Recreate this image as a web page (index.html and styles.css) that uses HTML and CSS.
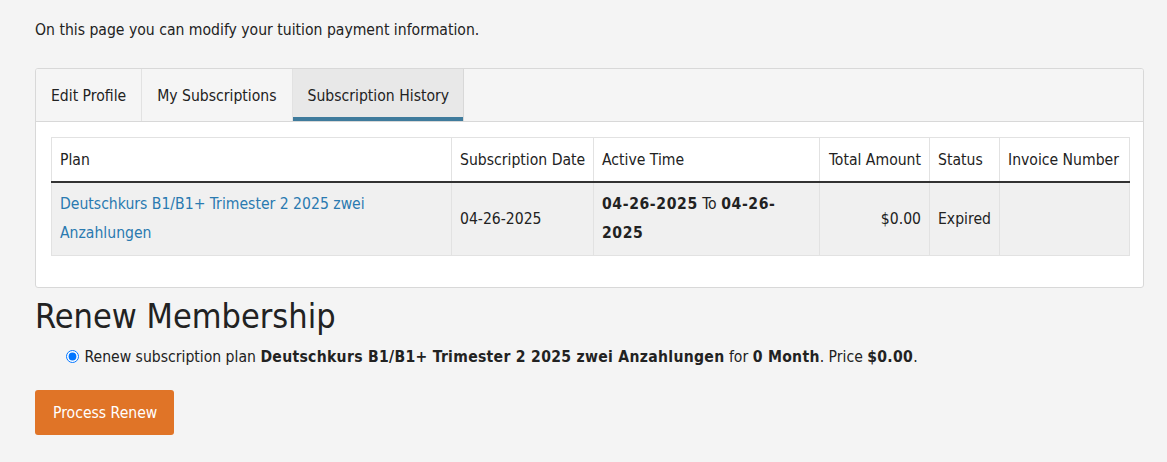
FILE: index.html
```html
<!DOCTYPE html>
<html>
<head>
<meta charset="utf-8">
<link rel="stylesheet" href="styles.css">
</head>
<body>
<div class="page">
  <p class="intro">On this page you can modify your tuition payment information.</p>
  <div class="panel">
    <div class="tabs">
      <div class="tab">Edit Profile</div>
      <div class="tab">My Subscriptions</div>
      <div class="tab active">Subscription History</div>
    </div>
    <div class="panel-body">
      <table class="history">
        <colgroup>
          <col class="c-plan">
          <col class="c-date">
          <col class="c-active">
          <col class="c-total">
          <col class="c-status">
          <col class="c-inv">
        </colgroup>
        <thead>
          <tr>
            <th>Plan</th>
            <th>Subscription Date</th>
            <th>Active Time</th>
            <th class="right">Total Amount</th>
            <th>Status</th>
            <th>Invoice Number</th>
          </tr>
        </thead>
        <tbody>
          <tr>
            <td><a href="#">Deutschkurs B1/B1+ Trimester 2 2025 zwei Anzahlungen</a></td>
            <td>04-26-2025</td>
            <td class="active-time"><strong>04-26-2025</strong> To <strong>04-26-<wbr>2025</strong></td>
            <td class="right">$0.00</td>
            <td>Expired</td>
            <td></td>
          </tr>
        </tbody>
      </table>
    </div>
  </div>
  <h2 class="renew-title">Renew Membership</h2>
  <label class="renew-option"><input type="radio" checked> Renew subscription plan <strong>Deutschkurs B1/B1+ Trimester 2 2025 zwei Anzahlungen</strong> for <strong>0 Month</strong>. Price <strong>$0.00</strong>.</label>
  <button class="btn">Process Renew</button>
</div>
</body>
</html>
```
FILE: styles.css
```css
html, body {
  margin: 0;
  padding: 0;
  background: #f4f4f4;
}
body {
  font-family: "DejaVu Sans Condensed", "DejaVu Sans", sans-serif;
  font-size: 15.6px;
  color: #222;
}
strong {
  letter-spacing: 0.3px;
}
.page {
  padding: 19px 23px 0 35px;
}
.intro {
  margin: 0 0 27px;
  line-height: 22px;
}
.panel {
  background: #fff;
  border: 1px solid #d8d8d8;
  border-radius: 3px;
  overflow: hidden;
}
.tabs {
  display: flex;
  background: #f5f5f5;
  border-bottom: 1px solid #d8d8d8;
  height: 52px;
}
.tab {
  padding: 1px 15px 0;
  display: flex;
  align-items: center;
  border-right: 1px solid #e2e2e2;
  color: #222;
}
.tab.active {
  background: #e8e8e8;
  box-shadow: inset 0 -4px 0 #3f7b9c;
  border-right: 1px solid #d8d8d8;
  padding-right: 14px;
}
.panel-body {
  padding: 15px 15px 31px;
}
.history {
  width: 1078px;
  border-collapse: collapse;
  table-layout: fixed;
}
.history th, .history td {
  border: 1px solid #e2e2e2;
  padding: 7px 8px;
  text-align: left;
  vertical-align: middle;
  line-height: 29px;
  font-weight: normal;
  overflow: hidden;
}
.history th {
  background: #fff;
  white-space: nowrap;
  padding: 8px 8px 6px;
  border-bottom: 2px solid #333;
}
.history td {
  background: #f0f0f0;
}
.history td.active-time strong {
  letter-spacing: 0.6px;
}
.history .right { text-align: right; }
.history a {
  color: #2a7ab0;
  text-decoration: none;
}
.c-plan { width: 400px; }
.c-date { width: 142px; }
.c-active { width: 226px; }
.c-total { width: 110px; }
.c-status { width: 70px; }
.c-inv { width: 130px; }
.renew-title {
  font-weight: normal;
  font-size: 34px;
  margin: 7px 0 10px;
  line-height: 42px;
}
.renew-option {
  display: block;
  margin-left: 31px;
  line-height: 20px;
}
.renew-option input {
  margin: 0 1px 0 0;
  width: 13px;
  height: 13px;
  vertical-align: -1px;
}
.btn {
  margin-top: 23px;
  background: #e07427;
  color: #fff;
  border: none;
  border-radius: 3px;
  font-family: inherit;
  font-size: 15.6px;
  padding: 0 17px 0 18px;
  height: 45px;
}
```
